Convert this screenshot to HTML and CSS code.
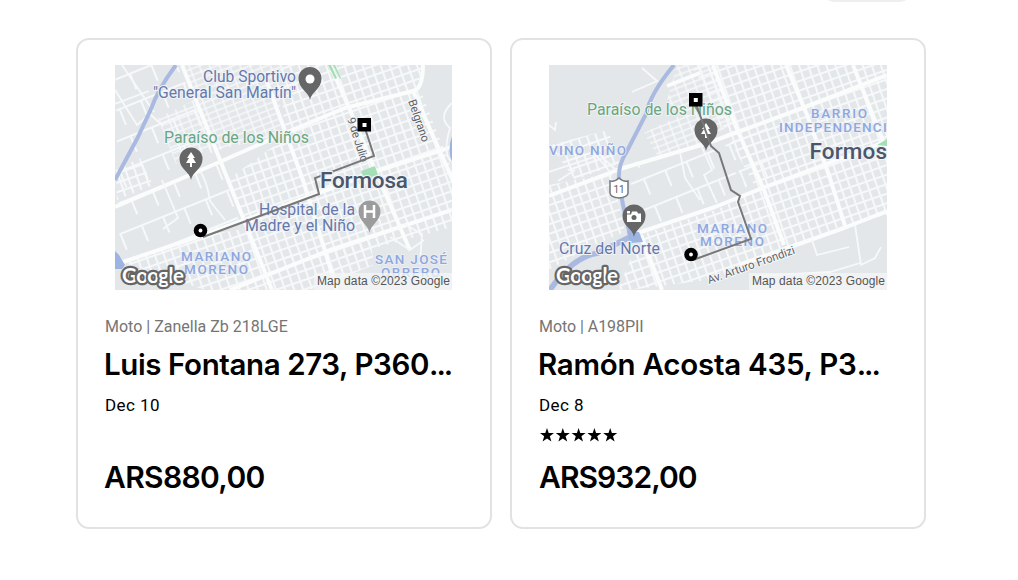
FILE: index.html
```html
<!DOCTYPE html>
<html lang="es">
<head>
<meta charset="utf-8">
<title>Trips</title>
<link rel="stylesheet" href="styles.css">
</head>
<body>
<header class="toolbar"><div class="filter-pill"></div></header>
<main class="trips">
  <article class="card">
    <svg class="map" width="337" height="225" viewBox="115 65 337 225">
      <defs>
        <pattern id="blocks" width="8.6" height="9" patternUnits="userSpaceOnUse" patternTransform="translate(3 2) rotate(-19)"><path d="M0 1H8.600M1 0V9" class="street"/></pattern>
        <pattern id="blocks-fine" width="9.5" height="6" patternUnits="userSpaceOnUse" patternTransform="rotate(-21)"><path d="M0 1H9.500M1 0V6" class="street fine"/></pattern>
        <pattern id="blocks-wide" width="23" height="29" patternUnits="userSpaceOnUse" patternTransform="rotate(-22)"><path d="M0 1H23M1 0V18" class="street"/></pattern>
      </defs>
      <rect x="115" y="65" width="337" height="225" class="land"/>
      <path d="M115 65H178L225 175 240 225 120 258Z" fill="url(#blocks-wide)"/>
      <path d="M280 65H423L420 89 460 190V225L330 260 258 258 227 180 285 138Z" fill="url(#blocks)"/>
      <path d="M182 65H280V135L215 151ZM158 118L196 99 216 146 176 164Z" fill="url(#blocks-fine)"/>
      <path d="M116 170L140 158 153 185 117 200ZM125 263L205 235 250 228 273 290H205Z" fill="url(#blocks)"/>
      <path d="M260 258L333 250 370 237 374 265 310 290H270Z" fill="url(#blocks)"/>
      <path class="road" d="M115 207 190 175 285 133 345 108 413 91Q423 89 423 65M120 263 200 236 319 193 380 170 452 147M230 290 330 250 452 210"/>
      <path class="road" d="M182 65 228 180 272 290M330 65 350 110 375 170 410 250M413 91 458 192M267 82 303 180 337 290"/>
      <path class="lane" d="M115 90 137 125 150 114 163 126M122 65 154 112M115 104 149 91M200 171Q207 181 210 201L225 220M162 180 178 218 163 229M390 237 410 250 424 240M404 224 422 234 420 264M452 103Q437 117 450 128 442 155 452 162"/>
      <path class="canal" d="M176 65Q158 89 151 109L137 139 115 180"/>
      <path class="water" d="M115 251 119 255 125 265 122 269H115ZM452 136Q447 150 452 162Z"/>
      <path class="park" d="M361 171 375 166 378 175 364 179ZM328 65l7 14 2-1-6-13Zm5 0 7 14 1-1-6-13Z"/>
      <g class="place">
        <text x="203" y="82" textLength="93" lengthAdjust="spacingAndGlyphs">Club Sportivo</text>
        <text x="153" y="98" textLength="143" lengthAdjust="spacingAndGlyphs">"General San Martín"</text>
        <text x="259" y="215" textLength="96" lengthAdjust="spacingAndGlyphs">Hospital de la</text>
        <text x="245" y="231" textLength="110" lengthAdjust="spacingAndGlyphs">Madre y el Niño</text>
      </g>
      <text class="place green" x="164" y="143" textLength="145" lengthAdjust="spacingAndGlyphs">Paraíso de los Niños</text>
      <g class="district">
        <text x="181" y="261" textLength="70">MARIANO</text>
        <text x="184" y="274" textLength="64">MORENO</text>
        <text x="375" y="264" textLength="72">SAN JOSÉ</text>
        <text x="381" y="277" textLength="59">OBRERO</text>
      </g>
      <text class="street-name" transform="translate(408 101) rotate(71)" textLength="44">Belgrano</text>
      <text class="street-name" transform="translate(347 119) rotate(72)" textLength="46">9 de Julio</text>
      <g transform="translate(310 100)"><path class="pin" d="M0 0C-1-8-11.500-11-11.500-21.500a11.500 11.500 0 0 1 23 0C11.500-11 1-8 0 0Z"/><circle cy="-21" r="4.500" fill="#fff"/></g>
      <g transform="translate(191 180)"><path class="pin" d="M0 0C-1-8-11.500-11-11.500-21a11.500 11.500 0 0 1 23 0C11.500-11 1-8 0 0Z"/><path d="M0-28-4-22H-2L-5-17H-1V-13H1V-17H5L2-22H4Z" fill="#fff"/></g>
      <g transform="translate(369.500 233)"><path class="pin gray" d="M0 0C-1-8-11-12-11-21.500a11 11 0 0 1 22 0C11-12 1-8 0 0Z"/><path d="M-4.500-28V-15M4.500-28V-15M-4.500-21.500H4.500" stroke="#fff" stroke-width="2.500"/></g>
      <path class="route" d="M364 125 374 156 315 178 319 194 203 237"/>
      <text class="city" x="320" y="187.500" textLength="88">Formosa</text>
      <rect x="357.500" y="118" width="13.500" height="13.500"/><rect x="362.500" y="123" width="4" height="4" fill="#fff"/>
      <circle cx="200.500" cy="230.500" r="6.800"/><circle cx="200.500" cy="230.500" r="1.900" fill="#fff"/>
      <rect x="314" y="273" width="138" height="17" fill="#f4f5f6" fill-opacity=".75"/>
      <text class="credit" x="317" y="285" textLength="133">Map data ©2023 Google</text>
      <text class="brand" x="122" y="283" textLength="62">Google</text>
    </svg>
    <p class="vehicle v1">Moto | Zanella Zb 218LGE</p>
    <h2 class="title t1">Luis Fontana 273, P360<span class="dots">...</span></h2>
    <p class="date">Dec 10</p>
    <div class="rating"></div>
    <p class="price">ARS880,00</p>
  </article>
  <article class="card">
    <svg class="map" width="338" height="225" viewBox="549 65 338 225">
      <rect x="549" y="65" width="338" height="225" class="land"/>
      <path d="M690 65H887V215L845 225 785 248 715 279 630 290H618L640 235 715 210 757 190 735 150 700 80Z" fill="url(#blocks)"/>
      <path d="M677 65H716L732 124 700 143 667 100ZM644 133L690 110 703 143 658 157Z" fill="url(#blocks-fine)"/>
      <path d="M549 185 612 173 625 232 590 247 549 270ZM550 145 608 130 620 163 575 180Z" fill="url(#blocks)"/>
      <path d="M625 165 708 142 757 190 715 210 645 231Z" class="land"/>
      <path d="M625 165 708 142 755 194 645 231Z" fill="url(#blocks-wide)"/>
      <path d="M725 145 767 126 784 172 746 186Z" fill="url(#blocks-wide)"/>
      <path class="road" d="M549 196 620 169 708 143 800 109 887 75M638 233 715 207 765 187 887 141M667 86 700 73M740 265 844 228 887 211"/>
      <path class="road" d="M713 65 736 127 764 190 784 245M786 65 807 115 829 175 846 229M853 65 887 151M641 235 662 290"/>
      <path class="lane" d="M549 172 600 155 618 172M575 170 558 181M590 148 610 172M632 92 657 81 642 68M700 143 712 170 704 175 717 203M680 152 685 178 700 200M549 125 555 130 556 122M855 225 861 265 875 258 881 247M812 240 817 255 849 247M755 276 830 272 860 263"/>
      <path class="canal" d="M674 65Q650 94 646 114L626 153Q618 165 619 180L623 205 630 235"/>
      <path class="canal wide" d="M634 235Q618 243 598 253 572 257 550 290"/>
      <path class="water" d="M627 231 639 232 643 242 630 243Z"/>
      <path class="park" d="M877 145 887 139V146Z"/>
      <text class="place green" x="587" y="114.500" textLength="145" lengthAdjust="spacingAndGlyphs">Paraíso de los Niños</text>
      <text class="place" x="559" y="254" textLength="101" lengthAdjust="spacingAndGlyphs">Cruz del Norte</text>
      <g class="district">
        <text x="549" y="155" textLength="77">VINO NIÑO</text>
        <text x="811" y="118" textLength="56">BARRIO</text>
        <text x="779" y="132" textLength="118">INDEPENDENCIA</text>
        <text x="697" y="233" textLength="70">MARIANO</text>
        <text x="700" y="246" textLength="64">MORENO</text>
      </g>
      <text class="city" x="809.500" y="158.500" textLength="77.500">Formos</text>
      <text class="street-name" transform="translate(709 284) rotate(-19.500)" textLength="92">Av. Arturo Frondizi</text>
      <path d="M610 181Q615 182 619 178 623 182 628 181V193Q628 197 619 198 610 197 610 193Z" fill="#fff" stroke="#737980" stroke-width="1.500"/>
      <text class="shield" x="613.500" y="192.500" textLength="11">11</text>
      <g transform="translate(634 237)"><path class="pin" d="M0 0C-1-8-11.500-11-11.500-21a11.500 11.500 0 0 1 23 0C11.500-11 1-8 0 0Z"/><path d="M-7-22.500H-3L-2-25.500H3L4-23.500H7V-15H-7ZM-7-26H-4V-23.500H-7Z" fill="#fff"/><circle cy="-19.500" r="2.500" class="lens"/></g>
      <g transform="translate(706 151)"><path class="pin" d="M0 0C-1-8-11.500-11-11.500-21a11.500 11.500 0 0 1 23 0C11.500-11 1-8 0 0Z"/><path d="M0-28-4-22H-2L-5-17H-1V-13H1V-17H5L2-22H4Z" fill="#fff"/></g>
      <path class="route" d="M695 101 711 146 719 153 731 190 740 196 738 202 751 239 693 260"/>
      <rect x="689" y="93" width="13.500" height="13.500"/><rect x="693.800" y="98" width="4" height="4" fill="#fff"/>
      <circle cx="691" cy="254.500" r="6.800"/><circle cx="691" cy="254.500" r="1.900" fill="#fff"/>
      <rect x="749" y="273" width="138" height="17" fill="#f4f5f6" fill-opacity=".75"/>
      <text class="credit" x="752" y="285" textLength="133">Map data ©2023 Google</text>
      <text class="brand" x="556" y="283" textLength="62">Google</text>
    </svg>
    <p class="vehicle v2">Moto | A198PII</p>
    <h2 class="title t2">Ramón Acosta 435, P3<span class="dots">...</span></h2>
    <p class="date">Dec 8</p>
    <div class="rating">
      <svg width="78" height="14" viewBox="0 0 78 14">
        <defs><path id="star" d="M7 0 8.700 5H14L9.800 8.300 11.400 13.500 7 10.400 2.600 13.500 4.200 8.300 0 5H5.300Z"/></defs>
        <use href="#star"/><use href="#star" x="15.800"/><use href="#star" x="31.600"/><use href="#star" x="47.400"/><use href="#star" x="63.200"/>
      </svg>
    </div>
    <p class="price p2">ARS932,00</p>
  </article>
</main>
</body>
</html>
```
FILE: styles.css
```css
* { box-sizing: border-box; }
body { margin: 0; background: #fff; color: #000; font-family: Inter, sans-serif; overflow: hidden; }
.toolbar { height: 38px; display: flex; justify-content: flex-end; padding-right: 102px; }
.filter-pill { width: 98px; height: 36px; margin-top: -34px; border-radius: 18px; background: #eee; }
.trips { display: flex; gap: 18px; padding-left: 76px; }
.card { width: 416px; height: 491px; padding: 25px 27px; border: 2px solid #e2e2e2; border-radius: 13px; }
.map { display: block; margin-left: 10px; font-family: Roboto, sans-serif; overflow: hidden; }
.vehicle, .date, .title, .price { margin: 0; white-space: nowrap; }
.vehicle { margin-top: 27px; font: 16px/20px Roboto, sans-serif; color: #757575; }
.v2 { letter-spacing: -.05px; }
.title { margin: 7px 0 0 -1px; font-size: 29.5px; line-height: 40px; font-weight: 600; letter-spacing: -.4px; }
.t2 { letter-spacing: -.25px; }
.dots { letter-spacing: -2px; }
.date { margin-top: 11px; font: 17px/20px Roboto, sans-serif; letter-spacing: .45px; }
.rating { height: 26px; padding: 13px 0 0 1px; }
.rating svg { display: block; }
.price { margin: 16px 0 0 -1px; font-size: 30px; line-height: 40px; font-weight: 600; letter-spacing: -.65px; }
.p2 { margin-left: 0; letter-spacing: -.95px; }
.land { fill: #e3e7ea; }
.street { fill: none; stroke: #f6f8f9; stroke-width: 2; }
.street.fine { stroke-width: 1.5; }
.road { fill: none; stroke: #fbfcfc; stroke-width: 4; stroke-linejoin: round; }
.lane { fill: none; stroke: #f7f8f9; stroke-width: 1.8; }
.canal { fill: none; stroke: #a9b9df; stroke-width: 4; }
.canal.wide { stroke-width: 5.5; }
.water { fill: #9db4e3; }
.park { fill: #a5dfb5; }
.place { font-size: 16px; fill: #6478ab; stroke: #f1f3f6; stroke-width: 2px; paint-order: stroke; }
.green { fill: #69a580; }
.district { font-size: 13.5px; font-weight: 500; fill: #8ea7df; stroke: #eef1f5; stroke-width: 1.5px; paint-order: stroke; }
.city { font-size: 22.5px; font-weight: 500; fill: #4b566b; stroke: #f1f3f5; stroke-width: 2px; paint-order: stroke; }
.street-name { font-size: 11.5px; fill: #5d6269; stroke: #f6f7f8; stroke-width: 2px; paint-order: stroke; }
.credit { font: 12px "Liberation Sans", sans-serif; fill: #555; }
.brand { font: bold 20.5px Lato, sans-serif; fill: #fff; stroke: #666; stroke-width: 4.5px; stroke-linejoin: round; paint-order: stroke; }
.shield { font-size: 10px; fill: #5d6269; }
.pin { fill: #666; }
.pin.gray { fill: #9c9c9c; }
.lens { fill: #666; }
.route { fill: none; stroke: #777; stroke-width: 2; }
```
